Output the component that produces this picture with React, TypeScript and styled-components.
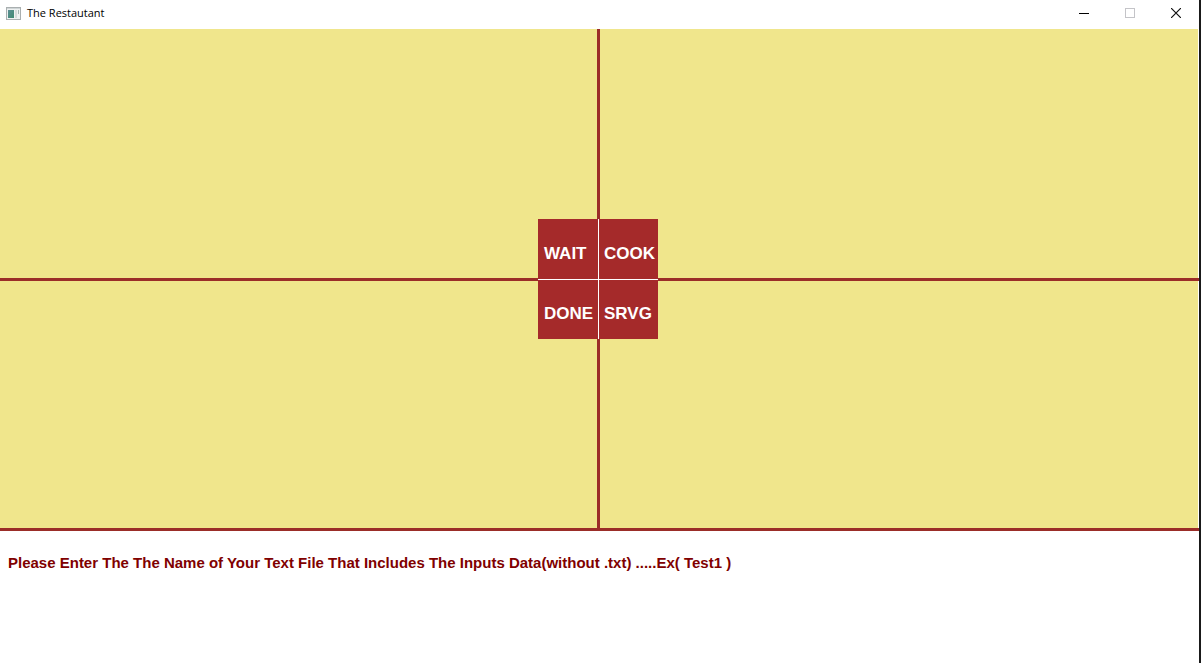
import React from "react";
import styled, { createGlobalStyle } from "styled-components";

const brown = "#a52a2a";
const line = "#9b2d28";
const khaki = "#f0e68c";

const GlobalStyle = createGlobalStyle`
  * { box-sizing: border-box; }
  body { margin: 0; background: #fff; font-family: "Liberation Sans", Arial, sans-serif; }
`;

const Window = styled.div`
  display: flex;
  flex-direction: column;
  min-height: 100vh;
  background: #fff;
  border-right: 2px solid #1a1a1a;
`;

const TitleBar = styled.header`
  display: flex;
  align-items: center;
  height: 29px;
  padding: 0 0 3px 6px;
  gap: 6px;
`;

const Title = styled.h1`
  flex: 1;
  margin: 0;
  font: 400 11px/16px "Open Sans", sans-serif;
  color: #000;
`;

const Controls = styled.div`
  display: flex;
`;

const ControlButton = styled.button`
  display: flex;
  align-items: center;
  justify-content: center;
  width: 46px;
  height: 26px;
  padding: 0;
  border: 0;
  background: transparent;
`;

const Board = styled.main`
  flex: 1;
  display: grid;
  grid-template-columns: 1fr 3px 1fr 2px;
  grid-template-rows: 1fr 3px 1fr;
  padding-top: 2px;
  background: linear-gradient(to left, #fff 1px, ${khaki} 1px);
  border-bottom: 3px solid ${line};
`;

const VerticalLine = styled.div`
  grid-area: 1 / 2 / 4 / 3;
  margin-top: -2px;
  background: ${line};
`;

const HorizontalLine = styled.div`
  grid-area: 2 / 1 / 3 / 5;
  background: ${line};
`;

const Regions = styled.div`
  grid-area: 2 / 2 / 3 / 3;
  display: grid;
  grid-template-columns: 60px 59px;
  grid-template-rows: 60px 59px;
  gap: 1px;
  width: 120px;
  height: 120px;
  margin: -59px 0 0 -59px;
  background: #fff;
`;

const Region = styled.div`
  padding: 25px 0 0 6px;
  background: ${brown};
  color: #fff;
  font-size: 17px;
  font-weight: 700;
  line-height: 20px;
  white-space: nowrap;

  &:nth-child(even) { padding-left: 5px; }
  &:nth-child(n + 3) { padding-top: 24px; }
`;

const StatusBar = styled.footer`
  display: flex;
  align-items: flex-start;
  height: 132px;
  padding: 22px 8px;
  color: #800000;
  font-size: 15px;
  font-weight: 700;
  line-height: 20px;
`;

const Prompt = styled.label`
  white-space: pre;
`;

const FileInput = styled.input`
  flex: 1;
  min-width: 0;
  height: 20px;
  padding: 0 8px;
  border: 0;
  outline: 0;
  background: transparent;
  color: inherit;
  font: inherit;
`;

const AppIcon = () => (
  <svg width="15" height="13" viewBox="0 0 15 13" aria-hidden="true">
    <rect x="0.5" y="0.5" width="14" height="12" fill="#eef1f1" stroke="#a9afb0" />
    <rect x="1" y="1" width="13" height="1" fill="#cfd5d6" />
    <defs>
      <linearGradient id="pane" x1="0" y1="0" x2="1" y2="1">
        <stop offset="0" stopColor="#5c8f95" />
        <stop offset="1" stopColor="#3f8a70" />
      </linearGradient>
    </defs>
    <rect x="2" y="3" width="6" height="8" fill="url(#pane)" />
    <rect x="9" y="3" width="2" height="8" fill="#d5dbdb" />
    <rect x="12" y="3" width="1" height="4" fill="#a5b5b2" />
  </svg>
);

const regions = ["WAIT", "COOK", "DONE", "SRVG"];

export default function App() {
  return (
    <Window>
      <GlobalStyle />
      <TitleBar>
        <AppIcon />
        <Title>The Restautant</Title>
        <Controls>
          <ControlButton type="button" aria-label="Minimize">
            <svg width="10" height="10" viewBox="0 0 10 10">
              <rect y="5" width="10" height="1" fill="#000" />
            </svg>
          </ControlButton>
          <ControlButton type="button" aria-label="Maximize" disabled>
            <svg width="10" height="10" viewBox="0 0 10 10">
              <rect x="0.5" y="0.5" width="9" height="9" fill="none" stroke="#c4c4c8" />
            </svg>
          </ControlButton>
          <ControlButton type="button" aria-label="Close">
            <svg width="10" height="10" viewBox="0 0 10 10">
              <path d="M0 0L10 10M10 0L0 10" stroke="#111" strokeWidth="1.2" />
            </svg>
          </ControlButton>
        </Controls>
      </TitleBar>
      <Board>
        <VerticalLine />
        <HorizontalLine />
        <Regions>
          {regions.map((name) => (
            <Region key={name}>{name}</Region>
          ))}
        </Regions>
      </Board>
      <StatusBar>
        <Prompt htmlFor="file-name">
          Please Enter The The Name of Your Text File That Includes The Inputs Data(without .txt) .....Ex( Test1 )
        </Prompt>
        <FileInput id="file-name" type="text" />
      </StatusBar>
    </Window>
  );
}
